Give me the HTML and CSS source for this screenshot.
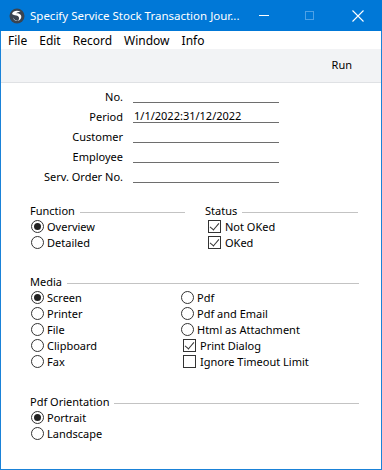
FILE: index.html
```html
<!DOCTYPE html>
<html>

<head>
    <title>Specify Service Stock Transaction Journal</title>
    <meta charset="UTF-8" />
    <link rel="stylesheet" href="styles.css">
</head>

<body>
    <div class="window">
        <div class="titlebar">
            <svg class="app-icon" width="16" height="16" viewBox="0 0 16 16">
                <circle cx="8" cy="8" r="7.5" fill="#3a4450" />
                <path d="M3 6 C4 2.5 9 2 11.5 4 C10 3.8 8 4.2 7 5.5 C8.5 5 10.5 5.6 11.8 7 C13 8.8 12 12 9 12.8 C10.5 11.2 10.5 9 8.8 8 C7 7 4.5 7.5 3 6 Z" fill="#ffffff" />
                <path d="M4 9.5 C5 11.5 7 12.8 9 12.8 C6.8 13.8 4.5 12 4 9.5 Z" fill="#c9d3dc" />
            </svg>
            <span class="title">Specify Service Stock Transaction Jour...</span>
            <span class="ctl ctl-min"></span>
            <span class="ctl ctl-max"></span>
            <svg class="ctl-close" width="12" height="12" viewBox="0 0 12 12">
                <path d="M0.5 0.5 L11.5 11.5 M11.5 0.5 L0.5 11.5" stroke="#ffffff" stroke-width="1.1" />
            </svg>
        </div>

        <div class="menubar">
            <span>File</span>
            <span>Edit</span>
            <span>Record</span>
            <span>Window</span>
            <span>Info</span>
        </div>

        <div class="toolbar">
            <span class="run">Run</span>
        </div>

        <div class="content">
            <div class="fields">
                <label>No.</label>
                <div class="field"></div>
                <label>Period</label>
                <div class="field">1/1/2022:31/12/2022</div>
                <label>Customer</label>
                <div class="field"></div>
                <label>Employee</label>
                <div class="field"></div>
                <label>Serv. Order No.</label>
                <div class="field"></div>
            </div>

            <div class="pair">
                <div class="group">
                    <div class="head"><span>Function</span><i></i></div>
                    <div class="opt"><span class="radio on"></span>Overview</div>
                    <div class="opt"><span class="radio"></span>Detailed</div>
                </div>
                <div class="group">
                    <div class="head"><span>Status</span><i></i></div>
                    <div class="opt check-opt"><span class="check on"></span>Not OKed</div>
                    <div class="opt check-opt"><span class="check on"></span>OKed</div>
                </div>
            </div>

            <div class="group media">
                <div class="head"><span>Media</span><i></i></div>
                <div class="media-grid">
                    <div class="opt"><span class="radio on"></span>Screen</div>
                    <div class="opt"><span class="radio"></span>Pdf</div>
                    <div class="opt"><span class="radio"></span>Printer</div>
                    <div class="opt"><span class="radio"></span>Pdf and Email</div>
                    <div class="opt"><span class="radio"></span>File</div>
                    <div class="opt"><span class="radio"></span>Html as Attachment</div>
                    <div class="opt"><span class="radio"></span>Clipboard</div>
                    <div class="opt check-opt"><span class="check on"></span>Print Dialog</div>
                    <div class="opt"><span class="radio"></span>Fax</div>
                    <div class="opt check-opt"><span class="check"></span>Ignore Timeout Limit</div>
                </div>
            </div>

            <div class="group orient">
                <div class="head"><span>Pdf Orientation</span><i></i></div>
                <div class="opt"><span class="radio on"></span>Portrait</div>
                <div class="opt"><span class="radio"></span>Landscape</div>
            </div>
        </div>
    </div>
</body>

</html>
```

FILE: styles.css
```css
* {
    box-sizing: border-box;
}

body {
    margin: 0;
    font-family: "Noto Sans", "Open Sans", sans-serif;
    font-size: 11px;
    color: #000000;
}

.window {
    width: 382px;
    height: 470px;
    display: flex;
    flex-direction: column;
    border: solid 1px #1a82d8;
    border-top: none;
    background: #ffffff;
}

.titlebar {
    height: 31px;
    margin: 0 -1px;
    background: #0078d7;
    color: #ffffff;
    display: flex;
    align-items: center;
    padding-left: 9px;
}

.app-icon {
    flex: none;
}

.title {
    margin-left: 5px;
    font-size: 11.5px;
    flex: 1;
    white-space: nowrap;
}

.ctl {
    display: block;
    flex: none;
}

.ctl-min {
    width: 10px;
    height: 1px;
    background: #ffffff;
    margin-right: 36px;
}

.ctl-max {
    width: 9px;
    height: 9px;
    border: solid 1px #4ea1e6;
    margin-right: 38px;
}

.ctl-close {
    flex: none;
    margin-right: 18px;
}

.menubar {
    height: 18px;
    display: flex;
    align-items: center;
    padding-left: 7px;
    gap: 12px;
    font-size: 12px;
}

.toolbar {
    height: 34px;
    background: #f2f3f5;
    border-bottom: solid 1px #dfe1e4;
    display: flex;
    align-items: center;
    justify-content: flex-end;
    padding-right: 29px;
    padding-bottom: 2px;
}

.content {
    flex: 1;
    padding-top: 4px;
}

.fields {
    display: grid;
    grid-template-columns: 122px 146px;
    grid-auto-rows: 20px;
    column-gap: 10px;
}

.fields label {
    text-align: right;
    line-height: 20px;
}

.field {
    height: 17px;
    border-bottom: solid 1px #6e6e6e;
    line-height: 20px;
    padding-left: 1px;
    margin-top: -1px;
}

.pair {
    display: grid;
    grid-template-columns: 155px 153px;
    column-gap: 20px;
    margin: 15px 0 0 29px;
}

.group {
    display: flex;
    flex-direction: column;
}

.head {
    height: 16px;
    display: flex;
    align-items: center;
}

.head i {
    flex: 1;
    height: 1px;
    background: #c3c3c3;
    margin: 5px 0 0 5px;
}

.opt {
    height: 16px;
    display: flex;
    align-items: center;
    white-space: nowrap;
}

.radio {
    width: 13px;
    height: 13px;
    border: solid 1px #333333;
    border-radius: 50%;
    margin: 0 3px 0 1px;
    display: flex;
    align-items: center;
    justify-content: center;
    flex: none;
}

.radio.on::after {
    content: "";
    width: 7px;
    height: 7px;
    border-radius: 50%;
    background: #222222;
}

.check {
    width: 13px;
    height: 13px;
    border: solid 1px #333333;
    margin: 0 4px 0 3px;
    position: relative;
    flex: none;
}

.check.on::after {
    content: "";
    position: absolute;
    left: 3px;
    top: 0px;
    width: 4px;
    height: 8px;
    border: solid #333333;
    border-width: 0 1px 1px 0;
    transform: rotate(40deg);
}

.media,
.orient {
    margin-left: 29px;
    width: 329px;
}

.media {
    margin-top: 23px;
}

.media-grid {
    display: grid;
    grid-template-columns: 150px 1fr;
}

.orient {
    margin-top: 24px;
}
```
